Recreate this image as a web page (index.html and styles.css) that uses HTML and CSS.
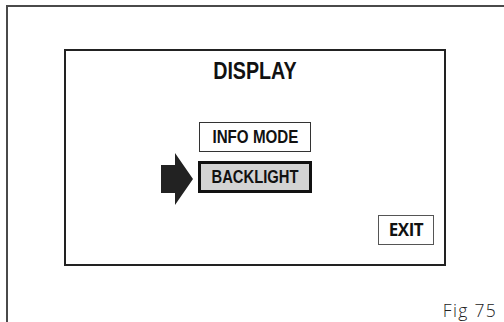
FILE: index.html
```html
<!DOCTYPE html>
<html>
<head>
<meta charset="utf-8">
<link rel="stylesheet" href="styles.css">
</head>
<body>
<div class="frame">
  <div class="screen">
    <div class="title"><span class="narrow">DISPLAY</span></div>
    <div class="menu">
      <div class="item"><span class="narrow">INFO MODE</span></div>
      <div class="item-wrap">
        <svg class="pointer" width="32" height="52" viewBox="0 0 32 52"><polygon points="0,12 14,12 14,0 32,26 14,52 14,40 0,40" fill="#222"/></svg>
        <div class="item selected"><span class="narrow">BACKLIGHT</span></div>
      </div>
    </div>
    <div class="exit">EXIT</div>
  </div>
  <div class="fig">Fig 75</div>
</div>
</body>
</html>
```
FILE: styles.css
```css
html, body {
  margin: 0;
  padding: 0;
  background: #fff;
}
body {
  width: 504px;
  height: 322px;
  overflow: hidden;
}
.frame {
  margin: 5px 0 0 6px;
  border-top: 2px solid #4a4a4a;
  border-left: 2px solid #4a4a4a;
  padding: 42px 0 0 56px;
  height: 320px;
  box-sizing: border-box;
}
.screen {
  width: 382px;
  height: 217px;
  box-sizing: border-box;
  border: 2px solid #222;
  display: flex;
  flex-direction: column;
  align-items: center;
}
.narrow {
  display: inline-block;
  transform: scaleX(0.82);
  transform-origin: center;
  white-space: nowrap;
}
.title {
  margin-top: 8px;
  font-family: "Liberation Sans", sans-serif;
  font-weight: bold;
  font-size: 24px;
  line-height: 24px;
  color: #111;
}
.menu {
  margin-top: 39px;
  display: flex;
  flex-direction: column;
  align-items: center;
  gap: 9px;
}
.item {
  width: 112px;
  height: 30px;
  box-sizing: border-box;
  border: 1px solid #333;
  text-align: center;
  font-family: "Liberation Sans", sans-serif;
  font-weight: bold;
  font-size: 18.5px;
  line-height: 28px;
  color: #111;
}
.item-wrap {
  position: relative;
}
.item.selected {
  width: 114px;
  height: 32px;
  border: 3px solid #111;
  background: #d3d3d3;
  font-size: 18px;
  line-height: 26px;
}
.pointer {
  position: absolute;
  right: 119px;
  top: -8px;
}
.exit {
  margin-top: auto;
  margin-bottom: 19px;
  margin-right: 10px;
  align-self: flex-end;
  width: 56px;
  height: 30px;
  box-sizing: border-box;
  border: 1px solid #555;
  text-align: center;
  font-family: "Open Sans", sans-serif;
  font-weight: bold;
  font-size: 17px;
  line-height: 28px;
  letter-spacing: -0.5px;
  color: #111;
}
.fig {
  margin-top: 34px;
  text-align: right;
  padding-right: 7px;
  font-family: "Open Sans", sans-serif;
  font-weight: 300;
  font-size: 17.5px;
  line-height: 20px;
  letter-spacing: 1.3px;
  color: #222;
}
```
